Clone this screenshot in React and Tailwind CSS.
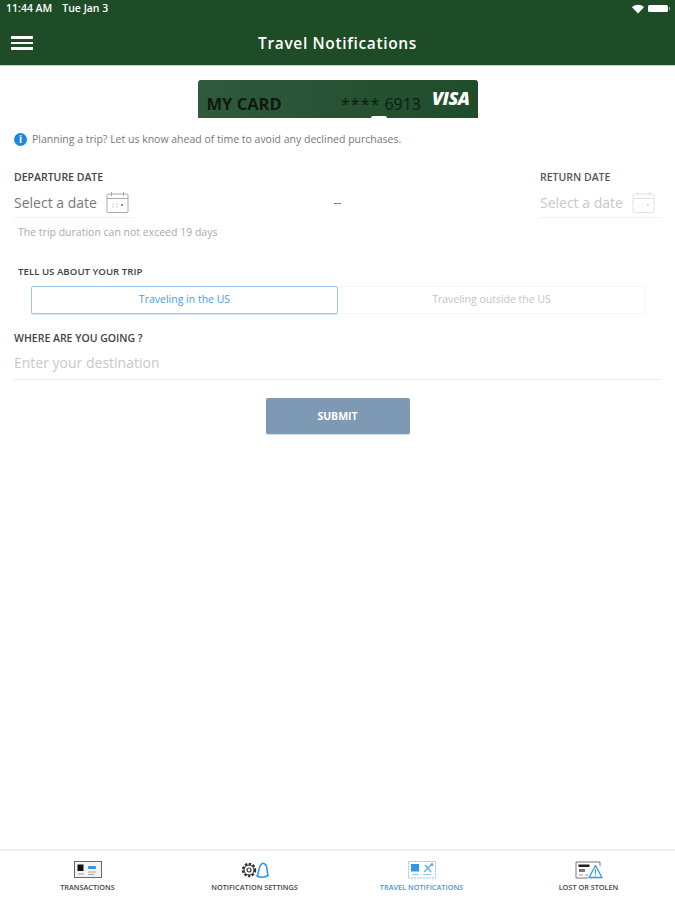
import React from "react";

const font = { fontFamily: '"Open Sans", sans-serif' };

function Cal({ dim }) {
  return (
    <svg width="23" height="23" viewBox="0 0 23 23" fill="none" stroke={dim ? "#e2e2e2" : "#a8a8a8"} strokeWidth="1">
      <rect x="1" y="3" width="21" height="18.5" rx="1" />
      <path d="M1 7.500h21M5.500 1v4M17.500 1v4" />
      <path d="M6 13h2M10 13h2M6 16h2M10 16h2" stroke={dim ? "#eee" : "#ccc"} />
      <path d="M15 13h2v2h-2z" fill={dim ? "#ddd" : "#888"} stroke="none" />
    </svg>
  );
}

function NavIcon({ type }) {
  if (type === "tx")
    return (
      <svg width="28" height="18" viewBox="0 0 28 18" fill="none">
        <rect x="0.500" y="0.500" width="27" height="16" fill="#f3f3f3" stroke="#666" />
        <rect x="3.500" y="3.500" width="6" height="6.500" fill="#111" />
        <rect x="14" y="5" width="8" height="3" rx="1" fill="#2f96e8" />
        <path d="M4 13h6M14 11h8M14 13.500h6" stroke="#a5a5a5" strokeWidth="1" />
      </svg>
    );
  if (type === "settings")
    return (
      <svg width="28" height="18" viewBox="0 0 28 18" fill="none">
        <circle cx="8" cy="9" r="6" stroke="#333" strokeWidth="2.400" strokeDasharray="2.400 1.500" />
        <circle cx="8" cy="9" r="5" stroke="#333" strokeWidth="1" />
        <circle cx="8" cy="9" r="2" stroke="#333" strokeWidth="1.200" />
        <path d="M16 15c2-2 1-8 3.500-10.500 1-2 2.500-2.500 3.500-2 2 1 2.500 2 2.800 4 .3 3 .7 6 1.200 8-3 2-8 2.500-11 .5z" stroke="#2f96e8" strokeWidth="1.600" />
      </svg>
    );
  if (type === "travel")
    return (
      <svg width="28" height="18" viewBox="0 0 28 18" fill="none">
        <rect x="0.500" y="0.500" width="27" height="16.500" stroke="#8fc3ee" strokeDasharray="2 1" />
        <rect x="3" y="3" width="8" height="7.500" fill="#2f96e8" />
        <path d="M4 13.500h7M15 13.500h8" stroke="#9ccbf0" />
        <path d="M16 11l8-8M17 4l6 7" stroke="#64b0ec" strokeWidth="1.400" />
        <circle cx="24" cy="3.500" r="1.500" fill="#64b0ec" />
      </svg>
    );
  return (
    <svg width="28" height="18" viewBox="0 0 28 18" fill="none">
      <path d="M25 5V1H1v16h12" stroke="#777" />
      <rect x="3.500" y="3.500" width="11" height="2.500" fill="#222" />
      <path d="M4 8h6v3H4z" fill="#777" />
      <path d="M4 14h4M10 14h3" stroke="#999" />
      <path d="M20.500 4.500L27 16.500H14z" fill="#fff" stroke="#2f96e8" strokeWidth="1.300" strokeLinejoin="round" />
      <path d="M20.500 8.500v4M20.500 13.500v1.300" stroke="#2f96e8" strokeWidth="1.200" />
    </svg>
  );
}

function NavItem({ type, label, active }) {
  return (
    <div className="flex flex-1 flex-col items-center">
      <NavIcon type={type} />
      <span className={`mt-[4px] text-[7.300px] leading-[9px] font-semibold ${active ? "text-[#3f97e0]" : "text-[#444]"}`}>{label}</span>
    </div>
  );
}

function DateField({ label, dim }) {
  return (
    <div className="w-[121px]">
      <div className={`text-[10.500px] leading-[12px] font-semibold ${dim ? "text-[#555]" : "text-[#444]"}`}>{label}</div>
      <div className="mt-[6px] flex h-[29px] items-center gap-[9px] border-b border-[#f0f0f0] pb-[2px]">
        <span className={`text-[14px] ${dim ? "text-[#c8c8c8]" : "text-[#777]"}`}>Select a date</span>
        <Cal dim={dim} />
      </div>
    </div>
  );
}

export default function App() {
  return (
    <div style={font} className="flex h-[900px] w-[675px] flex-col overflow-hidden bg-white">
      <header className="h-[66px] shrink-0 border-b border-[#c8d4ca] bg-[#1e4c26] text-white">
        <div className="flex h-[17px] items-center justify-between pr-[5px] pl-[6px]">
          <div className="flex gap-[10px] text-[10.500px] leading-none font-semibold">
            <span>11:44 AM</span>
            <span>Tue Jan 3</span>
          </div>
          <div className="flex items-center gap-[4px]">
            <svg width="12" height="10" viewBox="0 0 12 10" fill="white">
              <path d="M6 9.500L0 3.200C3.500 0 8.500 0 12 3.200z" />
            </svg>
            <div className="h-[7px] w-[20px] rounded-[1.500px] bg-white" />
            <div className="ml-[-3px] h-[3px] w-[1px] bg-[#9db3a0]" />
          </div>
        </div>
        <div className="relative flex h-[50px] items-center justify-center">
          <div className="absolute top-[19px] left-[11px] flex w-[22px] flex-col gap-[3px]">
            <div className="h-[2.500px] bg-white" />
            <div className="h-[2.500px] bg-white" />
            <div className="h-[2.500px] bg-white" />
          </div>
          <h1 className="mt-[4px] text-[15.500px] leading-none font-semibold tracking-[0.65px]">Travel Notifications</h1>
        </div>
      </header>

      <main className="flex-1 px-[14px]">
        <div className="mt-[14px] flex justify-center">
          <div className="relative h-[38px] w-[280px] overflow-hidden rounded-t-[3px] bg-gradient-to-r from-[#2f5a3c] to-[#1f4c2b]">
            <div className="flex items-start justify-between pt-[9px] pr-[8px] pl-[9px]">
              <span className="mt-[6px] text-[16.500px] leading-[18px] font-bold text-[#0e1a10]">MY CARD</span>
              <div className="flex items-start">
                <span className="mt-[6px] text-[16px] leading-[18px] text-[#0e1a10]">
                  <span className="tracking-[1px]">****</span> 6913
                </span>
                <span className="ml-[11px] text-[18px] leading-[18px] font-extrabold tracking-[-0.5px] text-white italic">VISA</span>
              </div>
            </div>
            <div className="absolute bottom-0 left-[173px] h-[2px] w-[16px] rounded-t-[2px] bg-white" />
          </div>
        </div>

        <div className="mt-[14px] flex h-[14px] items-center gap-[5px]">
          <span className="flex h-[13px] w-[13px] items-center justify-center rounded-full bg-[#1c88dc] text-[10px] leading-none font-bold text-white">i</span>
          <span className="text-[10.500px] leading-none text-[#777]">Planning a trip? Let us know ahead of time to avoid any declined purchases.</span>
        </div>

        <div className="mt-[25px] flex items-start justify-between">
          <DateField label="DEPARTURE DATE" />
          <span className="mt-[25px] text-[12px] leading-[14px] text-[#666]">--</span>
          <DateField label="RETURN DATE" dim />
        </div>

        <div className="mt-[8px] pl-[4px] text-[10.500px] leading-[12px] text-[#aaa]">The trip duration can not exceed 19 days</div>

        <div className="mt-[28px] pl-[4px] text-[9.700px] leading-[12px] font-semibold text-[#444]">TELL US ABOUT YOUR TRIP</div>

        <div className="mt-[8px] ml-[17px] flex h-[28px] w-[615px]">
          <div className="flex w-[307px] items-center justify-center rounded-[2px] border border-[#9cc6ea] text-[10.500px] text-[#4a9ce0] shadow-[0_1px_1px_#d5e6f5]">Traveling in the US</div>
          <div className="flex flex-1 items-center justify-center rounded-r-[2px] border border-l-0 border-[#f6f6f6] text-[10.500px] text-[#c4c4c4]">Traveling outside the US</div>
        </div>

        <div className="mt-[18px] text-[10.500px] leading-[12px] font-semibold text-[#444]">WHERE ARE YOU GOING ?</div>
        <div className="mt-[5px] flex h-[31px] w-[647px] items-center border-b border-[#ececec] pb-[4px] text-[14px] text-[#c8c8c8]">Enter your destination</div>

        <div className="mt-[18px] flex justify-center">
          <button className="h-[36px] w-[144px] rounded-[2px] bg-[#7e99b3] pt-[1px] text-[10.500px] font-bold text-white shadow-[0_1px_1px_#d0d8e0]">SUBMIT</button>
        </div>
      </main>

      <nav className="flex h-[51px] shrink-0 border-t-2 border-[#eeeeee] pt-[10px] pr-[3px] pl-[4px]">
        <NavItem type="tx" label="TRANSACTIONS" />
        <NavItem type="settings" label="NOTIFICATION SETTINGS" />
        <NavItem type="travel" label="TRAVEL NOTIFICATIONS" active />
        <NavItem type="lost" label="LOST OR STOLEN" />
      </nav>
    </div>
  );
}
